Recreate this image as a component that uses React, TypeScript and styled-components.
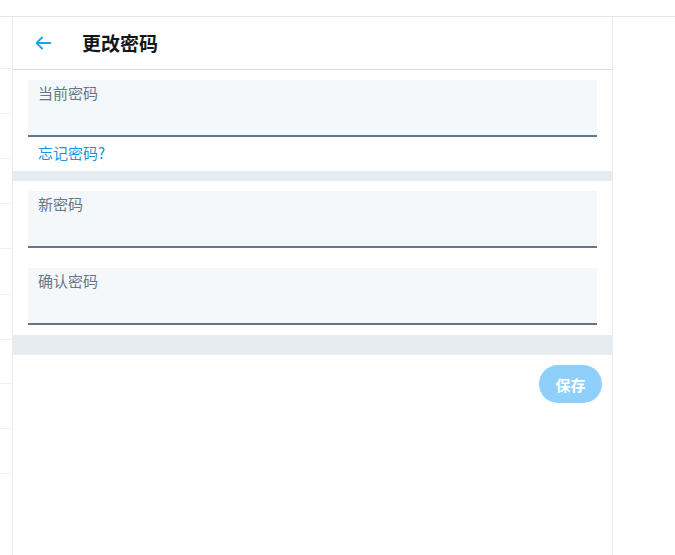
import styled, { createGlobalStyle } from 'styled-components'

const Global = createGlobalStyle`
  html, body {
    margin: 0;
    padding: 0;
    background: #fff;
  }
  body {
    font-family: "Noto Sans CJK SC", "Noto Sans", "Liberation Sans", sans-serif;
    color: #14171a;
  }
`

const TopBar = styled.div`
  height: 16px;
  border-bottom: 1px solid #e1e6ea;
`

const Layout = styled.div`
  display: flex;
  align-items: stretch;
  height: 538px;
`

const SideStrip = styled.div`
  width: 12px;
  display: flex;
  flex-direction: column;
`

const SideRow = styled.div<{ $h: number }>`
  height: ${p => p.$h}px;
  flex-shrink: 0;
  box-sizing: border-box;
  border-bottom: 1px solid #eef1f3;
`

const Panel = styled.main`
  width: 599px;
  border-left: 1px solid #e6ecf0;
  border-right: 1px solid #e6ecf0;
  display: flex;
  flex-direction: column;
`

const Header = styled.header`
  height: 52px;
  border-bottom: 1px solid #d9dfe3;
  display: flex;
  align-items: center;
  padding: 0 19px;
  gap: 28px;
`

const BackButton = styled.button`
  border: none;
  background: none;
  padding: 0;
  width: 22px;
  height: 22px;
  display: flex;
  align-items: center;
  justify-content: center;
  color: #1da1f2;
  cursor: pointer;
`

const Title = styled.h2`
  margin: 0;
  font-size: 19px;
  font-weight: 700;
  line-height: 24px;
  color: #14171a;
`

const FieldRow = styled.div`
  padding: 10px 15px;
`

const Field = styled.label`
  display: block;
  height: 57px;
  box-sizing: border-box;
  background: #f5f8fa;
  border-bottom: 2px solid #657786;
  padding: 3px 10px 0;
`

const FieldLabel = styled.span`
  display: block;
  font-size: 15px;
  line-height: 20px;
  color: #657786;
`

const LinkRow = styled.div`
  padding: 0 25px 8px;
  margin-top: -5px;
  line-height: 20px;
`

const ForgotLink = styled.a`
  font-size: 15px;
  line-height: 20px;
  color: #1b95e0;
  text-decoration: none;
`

const Separator = styled.div<{ $h: number }>`
  height: ${p => p.$h}px;
  background: #e6ecf0;
`

const Actions = styled.div`
  display: flex;
  justify-content: flex-end;
  padding: 10px;
`

const SaveButton = styled.button`
  height: 38px;
  min-width: 63px;
  padding: 0 16px;
  border: none;
  border-radius: 9999px;
  background: #8ed0f9;
  color: #fff;
  font-family: inherit;
  font-size: 15px;
  font-weight: 700;
  cursor: default;
`

const sideRows = [52, 45, 45, 45, 45, 46, 45, 44, 45, 45]

const fields = ['新密码', '确认密码']

export default function App() {
  return (
    <>
      <Global />
      <TopBar />
      <Layout>
        <SideStrip>
          {sideRows.map((h, i) => (
            <SideRow key={i} $h={h} />
          ))}
        </SideStrip>
        <Panel>
          <Header>
            <BackButton aria-label="返回">
              <svg viewBox="0 0 24 24" width="22" height="22" fill="currentColor">
                <path d="M20 11H7.414l4.293-4.293a1 1 0 0 0-1.414-1.414l-6 6a1 1 0 0 0 0 1.414l6 6a.996.996 0 0 0 1.414 0 1 1 0 0 0 0-1.414L7.414 13H20a1 1 0 1 0 0-2z" />
              </svg>
            </BackButton>
            <Title>更改密码</Title>
          </Header>
          <FieldRow>
            <Field>
              <FieldLabel>当前密码</FieldLabel>
            </Field>
          </FieldRow>
          <LinkRow>
            <ForgotLink href="#">忘记密码?</ForgotLink>
          </LinkRow>
          <Separator $h={10} />
          {fields.map(f => (
            <FieldRow key={f}>
              <Field>
                <FieldLabel>{f}</FieldLabel>
              </Field>
            </FieldRow>
          ))}
          <Separator $h={20} />
          <Actions>
            <SaveButton disabled>保存</SaveButton>
          </Actions>
        </Panel>
      </Layout>
    </>
  )
}
